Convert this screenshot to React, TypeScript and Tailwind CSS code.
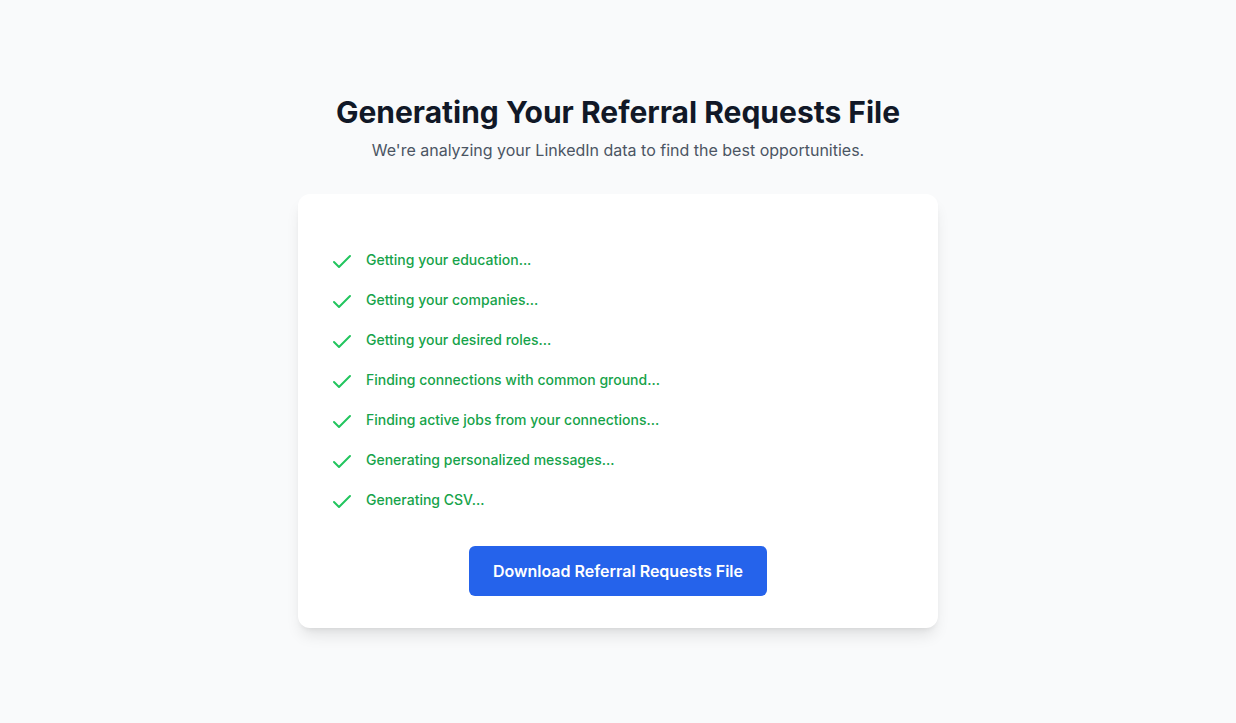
const steps = [
  "Getting your education...",
  "Getting your companies...",
  "Getting your desired roles...",
  "Finding connections with common ground...",
  "Finding active jobs from your connections...",
  "Generating personalized messages...",
  "Generating CSV...",
];

function CheckIcon() {
  return (
    <svg
      viewBox="0 0 24 24"
      fill="none"
      stroke="currentColor"
      strokeWidth={2}
      strokeLinecap="round"
      strokeLinejoin="round"
      className="mt-1 h-6 w-6 shrink-0 text-[#22c55e]"
    >
      <path d="M20 6 9 17l-5-5" />
    </svg>
  );
}

export default function App() {
  return (
    <div
      className="min-h-screen bg-[#f9fafb] px-4 pt-[94px]"
      style={{ fontFamily: "Inter, 'Noto Sans', sans-serif" }}
    >
      <div className="mx-auto flex max-w-[640px] flex-col items-center">
        <h1 className="text-center text-3xl font-bold text-[#111827]">
          Generating Your Referral Requests File
        </h1>
        <p className="mt-2 text-center text-base text-[#4b5563]">
          We're analyzing your LinkedIn data to find the best opportunities.
        </p>

        {/* Progress card */}
        <div className="mt-8 w-full rounded-xl bg-white px-8 pb-8 pt-[46px] shadow-lg">
          <ul>
            {steps.map((step) => (
              <li key={step} className="flex h-10 items-center gap-3">
                <CheckIcon />
                <span className="text-sm font-medium text-[#16a34a]">{step}</span>
              </li>
            ))}
          </ul>
          <div className="mt-[26px] flex justify-center">
            <button className="h-[50px] rounded-md bg-[#2563eb] px-6 text-base font-semibold text-white hover:bg-[#1d4ed8]">
              Download Referral Requests File
            </button>
          </div>
        </div>
      </div>
    </div>
  );
}
